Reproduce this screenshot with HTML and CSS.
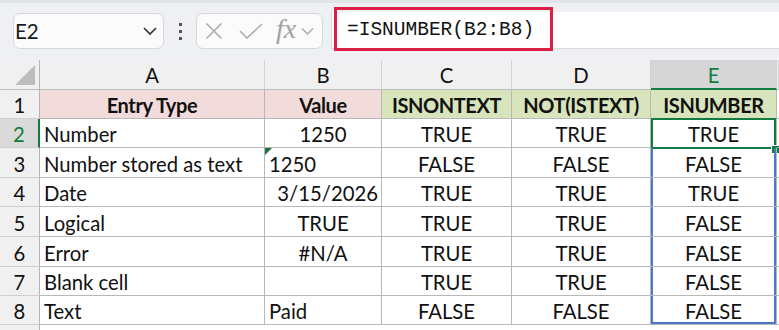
FILE: index.html
```html
<!DOCTYPE html>
<html lang="en">
<head>
	<meta charset="UTF-8">
	<meta name="viewport" content="width=device-width, initial-scale=1.0">
	<title>ISNUMBER</title>
	<link rel="stylesheet" href="styles.css">
</head>
<body>
	<div class="toolbar">
		<div class="namebox">
			<span>E2</span>
			<svg width="16" height="10" viewBox="0 0 16 10"><path d="M2 2 L8 8 L14 2" fill="none" stroke="#333" stroke-width="1.6"/></svg>
		</div>
		<div class="dots"><i></i><i></i><i></i></div>
		<div class="fxbox">
			<svg class="ico" width="18" height="18" viewBox="0 0 18 18"><path d="M1.5 1.5 L16.5 16.5 M16.5 1.5 L1.5 16.5" stroke="#a9a9a9" stroke-width="1.5"/></svg>
			<svg class="ico" width="24" height="16" viewBox="0 0 24 16"><path d="M1 8 L8 15 L23 1" fill="none" stroke="#a9a9a9" stroke-width="1.5"/></svg>
			<span class="fx">fx</span>
			<svg width="13" height="8" viewBox="0 0 13 8"><path d="M1 1.5 L6.5 7 L12 1.5" fill="none" stroke="#a9a9a9" stroke-width="1.4"/></svg>
		</div>
		<div class="formula">
			<span>=ISNUMBER(B2:B8)</span>
			<div class="mark"></div>
		</div>
	</div>

	<div class="sheet">
		<div class="h corner"><svg width="20" height="20" viewBox="0 0 20 20"><path d="M0 20 L20 20 L20 0 Z" fill="#bdbdbd"/></svg></div>
		<div class="h">A</div>
		<div class="h">B</div>
		<div class="h">C</div>
		<div class="h">D</div>
		<div class="h hsel">E</div>
		<div class="h"></div>

		<div class="rh">1</div>
		<div class="c b pink">Entry Type</div>
		<div class="c b pink">Value</div>
		<div class="c b green">ISNONTEXT</div>
		<div class="c b green">NOT(ISTEXT)</div>
		<div class="c b green">ISNUMBER</div>
		<div class="c x"></div>

		<div class="rh rsel">2</div>
		<div class="c l">Number</div>
		<div class="c">1250</div>
		<div class="c">TRUE</div>
		<div class="c">TRUE</div>
		<div class="c act">TRUE</div>
		<div class="c x"></div>

		<div class="rh">3</div>
		<div class="c l">Number stored as text</div>
		<div class="c l warn">1250</div>
		<div class="c">FALSE</div>
		<div class="c">FALSE</div>
		<div class="c rng">FALSE</div>
		<div class="c x"></div>

		<div class="rh">4</div>
		<div class="c l">Date</div>
		<div class="c r">3/15/2026</div>
		<div class="c">TRUE</div>
		<div class="c">TRUE</div>
		<div class="c rng">TRUE</div>
		<div class="c x"></div>

		<div class="rh">5</div>
		<div class="c l">Logical</div>
		<div class="c">TRUE</div>
		<div class="c">TRUE</div>
		<div class="c">TRUE</div>
		<div class="c rng">FALSE</div>
		<div class="c x"></div>

		<div class="rh">6</div>
		<div class="c l">Error</div>
		<div class="c">#N/A</div>
		<div class="c">TRUE</div>
		<div class="c">TRUE</div>
		<div class="c rng">FALSE</div>
		<div class="c x"></div>

		<div class="rh">7</div>
		<div class="c l">Blank cell</div>
		<div class="c"></div>
		<div class="c">TRUE</div>
		<div class="c">TRUE</div>
		<div class="c rng">FALSE</div>
		<div class="c x"></div>

		<div class="rh">8</div>
		<div class="c l">Text</div>
		<div class="c l">Paid</div>
		<div class="c">FALSE</div>
		<div class="c">FALSE</div>
		<div class="c rng last">FALSE</div>
		<div class="c x"></div>

		<div class="rh end"></div>
		<div class="blank"></div>
	</div>
</body>
</html>
```

FILE: styles.css
```css
body{
	margin: 0;
	width: 779px;
	height: 330px;
	overflow: hidden;
	background: #fff;
	font-family: Lato, "Liberation Sans", sans-serif;
	color: #111;
}
.toolbar{
	height: 60px;
	box-sizing: border-box;
	background: #eef0f4;
	border-top: 3px solid #e1e4e9;
	display: flex;
	align-items: flex-start;
	padding: 10px 0 0 13px;
}
.namebox{
	width: 151px;
	height: 36px;
	box-sizing: border-box;
	border: 1px solid #d5d7db;
	border-radius: 7px;
	background: #fbfbfc;
	display: flex;
	align-items: center;
	justify-content: space-between;
	padding: 0 5px 0 1px;
	font-size: 20.5px;
	color: #1a1a1a;
}
.dots{
	width: 32px;
	height: 36px;
	display: flex;
	flex-direction: column;
	align-items: center;
	justify-content: center;
	gap: 4px;
}
.dots i{
	display: block;
	width: 3px;
	height: 3px;
	background: #555;
}
.fxbox{
	width: 127px;
	height: 36px;
	box-sizing: border-box;
	border: 1px solid #d5d7db;
	border-radius: 7px;
	background: #fbfbfc;
	display: flex;
	align-items: center;
	padding-left: 8px;
}
.ico{
	margin-right: 16px;
}
.fx{
	font-family: "Liberation Serif", serif;
	font-style: italic;
	font-size: 28px;
	color: #a2a2a2;
	margin: -5px 5px 0 -3px;
}
.formula{
	flex: 1;
	height: 37px;
	margin: -1px 0 0 8px;
	box-sizing: border-box;
	background: #fff;
	border-left: 1px solid #d4d6da;
	border-bottom: 1px solid #dadada;
	position: relative;
	display: flex;
	align-items: center;
	padding-left: 15px;
	font-family: "Liberation Mono", monospace;
	font-size: 19.5px;
	color: #111;
}
.mark{
	position: absolute;
	left: 2px;
	top: -5px;
	width: 219px;
	height: 44px;
	box-sizing: border-box;
	border: 3px solid #dc1f44;
}

.sheet{
	display: grid;
	grid-template-columns: 40px 225px 117px 130px 139px 126px 2px;
	grid-template-rows: 30px 29px 29px 30px 29px 30px 30px 29px 29px 5px;
	font-size: 20.3px;
}
.sheet > div{
	box-sizing: border-box;
	display: flex;
	align-items: center;
	justify-content: center;
	position: relative;
}
.h{
	background: #f0f0f0;
	border-right: 1px solid #d2d2d2;
	border-bottom: 1px solid #bdbdbd;
	padding-top: 1px;
}
.corner{
	align-items: flex-end !important;
	justify-content: flex-end !important;
	padding: 0 4px 4px 0;
	border-right-color: #b5b5b5 !important;
}
.hsel{
	background: #d6d6d6;
	color: #107c41;
	border-bottom: 2px solid #107c41 !important;
}
.rh{
	background: #f0f0f0;
	border-right: 1px solid #b5b5b5;
	border-bottom: 1px solid #cfcfcf;
	padding-top: 2px;
}
.rsel{
	background: #dadada;
	color: #107c41;
	border-right: 2px solid #107c41 !important;
}
.rh.end{
	border-bottom: none;
}
.c{
	border-right: 1px solid #b8b8b8;
	border-bottom: 1px solid #b8b8b8;
	padding-top: 2px;
	white-space: nowrap;
}
.c.x{
	border-right: none;
}
.blank{
	grid-column: 2 / 8;
}
.b{
	font-weight: bold;
	font-size: 20px;
	letter-spacing: -0.4px;
}
.l{
	justify-content: flex-start !important;
	padding-left: 4px;
}
.r{
	justify-content: flex-end !important;
	padding-right: 3px;
}
.pink{
	background: #f2dcdb;
}
.green{
	background: #d8e4bc;
}
.warn::before{
	content: "";
	position: absolute;
	left: 0;
	top: 0;
	border-top: 7px solid #1e7145;
	border-right: 7px solid transparent;
}
.act::before{
	content: "";
	position: absolute;
	left: 0;
	top: -1px;
	right: 0;
	bottom: -2px;
	border: 2px solid #107c41;
}
.act::after{
	content: "";
	position: absolute;
	right: -3px;
	bottom: -6px;
	width: 7px;
	height: 7px;
	background: #107c41;
	border-left: 1px solid #fff;
	border-top: 1px solid #fff;
}
.rng{
	box-shadow: inset 2px 0 #4a78c4, inset -2px 0 #4a78c4;
}
.rng.last{
	box-shadow: inset 2px 0 #4a78c4, inset -2px 0 #4a78c4, inset 0 -2px #4a78c4;
}
```
